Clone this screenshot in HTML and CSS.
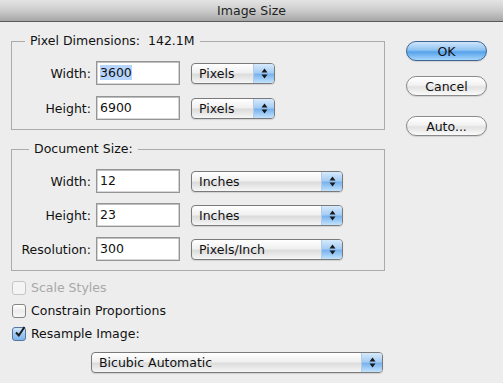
FILE: index.html
```html
<!DOCTYPE html>
<html lang="en">
<head>
  <meta charset="UTF-8">
  <title>Image Size</title>
  <link rel="stylesheet" href="styles.css">
</head>
<body>
  <!-- Window title -->
  <div class="titlebar">Image Size</div>

  <div class="dialog">
    <div class="main">
      <!-- Pixel Dimensions -->
      <fieldset class="group group-pixels">
        <legend>Pixel Dimensions:&nbsp; 142.1M</legend>
        <div class="row">
          <span class="field-label">Width:</span>
          <div class="input"><span class="selected">3600</span></div>
          <div class="popup popup-short">
            <span class="popup-text">Pixels</span>
            <span class="stepper"><svg width="7" height="11" viewBox="0 0 7 11"><path d="M3.5 0.5 L6.5 4.5 L0.5 4.5 Z M0.5 6.5 L6.5 6.5 L3.5 10.5 Z" fill="#1a1a1a"/></svg></span>
          </div>
        </div>
        <div class="row">
          <span class="field-label">Height:</span>
          <div class="input">6900</div>
          <div class="popup popup-short">
            <span class="popup-text">Pixels</span>
            <span class="stepper"><svg width="7" height="11" viewBox="0 0 7 11"><path d="M3.5 0.5 L6.5 4.5 L0.5 4.5 Z M0.5 6.5 L6.5 6.5 L3.5 10.5 Z" fill="#1a1a1a"/></svg></span>
          </div>
        </div>
      </fieldset>

      <!-- Document Size -->
      <fieldset class="group group-doc">
        <legend>Document Size:</legend>
        <div class="row">
          <span class="field-label">Width:</span>
          <div class="input">12</div>
          <div class="popup popup-mid">
            <span class="popup-text">Inches</span>
            <span class="stepper"><svg width="7" height="11" viewBox="0 0 7 11"><path d="M3.5 0.5 L6.5 4.5 L0.5 4.5 Z M0.5 6.5 L6.5 6.5 L3.5 10.5 Z" fill="#1a1a1a"/></svg></span>
          </div>
        </div>
        <div class="row">
          <span class="field-label">Height:</span>
          <div class="input">23</div>
          <div class="popup popup-mid">
            <span class="popup-text">Inches</span>
            <span class="stepper"><svg width="7" height="11" viewBox="0 0 7 11"><path d="M3.5 0.5 L6.5 4.5 L0.5 4.5 Z M0.5 6.5 L6.5 6.5 L3.5 10.5 Z" fill="#1a1a1a"/></svg></span>
          </div>
        </div>
        <div class="row">
          <span class="field-label">Resolution:</span>
          <div class="input">300</div>
          <div class="popup popup-mid">
            <span class="popup-text">Pixels/Inch</span>
            <span class="stepper"><svg width="7" height="11" viewBox="0 0 7 11"><path d="M3.5 0.5 L6.5 4.5 L0.5 4.5 Z M0.5 6.5 L6.5 6.5 L3.5 10.5 Z" fill="#1a1a1a"/></svg></span>
          </div>
        </div>
      </fieldset>

      <!-- Options -->
      <div class="checks">
        <div class="check-row disabled"><span class="checkbox"></span>Scale Styles</div>
        <div class="check-row"><span class="checkbox"></span>Constrain Proportions</div>
        <div class="check-row"><span class="checkbox checked"><svg width="12" height="12" viewBox="0 0 12 12"><path d="M2 6.5 L4.8 9.5 L10.5 1" fill="none" stroke="#1b1b1b" stroke-width="2"/></svg></span>Resample Image:</div>
      </div>

      <div class="popup popup-wide">
        <span class="popup-text">Bicubic Automatic</span>
        <span class="stepper"><svg width="7" height="11" viewBox="0 0 7 11"><path d="M3.5 0.5 L6.5 4.5 L0.5 4.5 Z M0.5 6.5 L6.5 6.5 L3.5 10.5 Z" fill="#1a1a1a"/></svg></span>
      </div>
    </div>

    <!-- Buttons -->
    <div class="buttons">
      <button type="button" class="btn btn-default">OK</button>
      <button type="button" class="btn btn-cancel">Cancel</button>
      <button type="button" class="btn btn-auto">Auto...</button>
    </div>
  </div>
</body>
</html>
```

FILE: styles.css
```css
/* Global Styles */
body {
  font-family: 'DejaVu Sans', sans-serif;
  font-size: 12.5px;
  color: #111;
  background-color: #ededed;
  margin: 0;
  padding: 0;
  width: 503px;
  height: 383px;
  overflow: hidden;
}

/* Title bar */
.titlebar {
  height: 21px;
  line-height: 21px;
  text-align: center;
  color: #1e1e1e;
  background: linear-gradient(#e4e4e4, #cccccc 50%, #a6a6a6);
  border-bottom: 1px solid #5a5a5a;
}

.dialog {
  display: flex;
}

.main {
  margin-left: 11px;
  width: 374px;
}

/* Group boxes */
.group {
  margin: 11px 0 0 0;
  padding: 12px 0 9px 0;
  border: 1px solid #ababab;
  min-width: 0;
  width: 374px;
  box-sizing: border-box;
}

.group legend {
  margin-left: 13px;
  padding: 0 5px;
  line-height: 16px;
}

.group-doc legend {
  margin-left: 17px;
}

.row {
  display: flex;
  align-items: center;
  height: 24px;
}

.group-pixels .row + .row {
  margin-top: 11px;
}

.group-doc .row + .row {
  margin-top: 10px;
}

.field-label {
  width: 79px;
  text-align: right;
  margin-right: 5px;
}

/* Text fields */
.input {
  width: 84px;
  height: 24px;
  box-sizing: border-box;
  border: 1px solid #959595;
  box-shadow: inset 0 1px 0 #bdbdbd, inset 1px 0 0 #d2d2d2, inset -1px 0 0 #d2d2d2, inset 0 -1px 0 #d8d8d8;
  background-color: white;
  padding: 0 3px;
  line-height: 22px;
  margin-right: 11px;
}

.selected {
  background-color: #b5d5ff;
}

/* Popup menus */
.popup {
  display: flex;
  align-items: stretch;
  height: 21px;
  box-sizing: border-box;
  border: 1px solid #7a7a7a;
  border-radius: 4px;
  overflow: hidden;
  background: linear-gradient(#ffffff, #f0f0f0 45%, #dcdcdc 55%, #f6f6f6);
  box-shadow: 0 1px 1px rgba(0, 0, 0, 0.12);
}

.popup-short {
  width: 84px;
}

.popup-mid {
  width: 152px;
}

.popup-wide {
  width: 292px;
  margin: 7px 0 0 80px;
}

.popup-text {
  flex: 1;
  padding-left: 7px;
  line-height: 19px;
}

.stepper {
  width: 20px;
  display: flex;
  align-items: center;
  justify-content: center;
  background: linear-gradient(#d6eafc, #a6cdf4 45%, #78b3ee 55%, #c3e3fc);
  border-left: 1px solid #b3cbe6;
}

/* Checkboxes */
.checks {
  margin-top: 5px;
}

.check-row {
  display: flex;
  align-items: center;
  height: 23px;
  margin-left: 1px;
}

.checkbox {
  width: 14px;
  height: 14px;
  box-sizing: border-box;
  border: 1px solid #858585;
  border-radius: 3px;
  background: linear-gradient(#ffffff, #ececec 50%, #f7f7f7);
  margin-right: 5px;
  display: flex;
  align-items: center;
  justify-content: center;
}

.checkbox.checked {
  border-color: #5575a3;
  background: linear-gradient(#d2e6fa, #9ec8f1 50%, #7fb5ec);
}

.checkbox.checked svg {
  margin: -3px -2px 0 0;
}

.check-row.disabled {
  color: #a8a8a8;
}

.check-row.disabled .checkbox {
  border-color: #c4c4c4;
  background: #f4f4f4;
}

/* Buttons */
.buttons {
  display: flex;
  flex-direction: column;
  margin: 19px 0 0 21px;
}

.btn {
  width: 81px;
  height: 20px;
  padding: 0;
  font-family: 'DejaVu Sans', sans-serif;
  font-size: 12.5px;
  color: #111;
  border: 1px solid #8a8a8a;
  border-radius: 10px;
  background: linear-gradient(#ffffff, #f2f2f2 45%, #e2e2e2 55%, #fafafa);
  box-shadow: 0 1px 1px rgba(0, 0, 0, 0.12);
}

.btn-default {
  border-color: #3f6595;
  background: linear-gradient(#cfe6fc, #8ec2f2 45%, #55a2ea 55%, #a6d6fc);
}

.btn-cancel {
  margin-top: 15px;
}

.btn-auto {
  margin-top: 20px;
}
```
